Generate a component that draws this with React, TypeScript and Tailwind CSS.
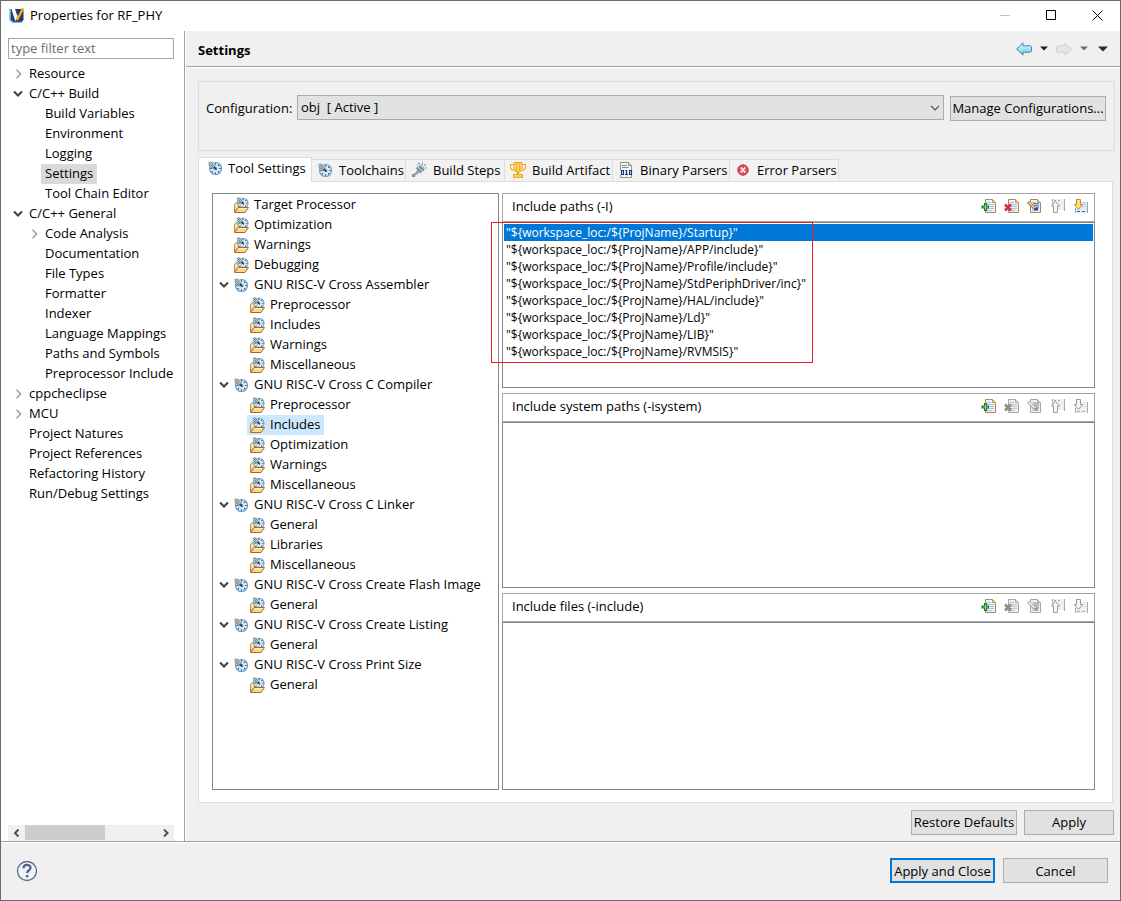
import React from "react";

type IconProps = { className?: string };

const Chevron = ({ open }: { open: boolean }) => (
  <svg width="10" height="10" viewBox="0 0 10 10" fill="none" strokeWidth={open ? 2 : 1.6} stroke={open ? "#404040" : "#a0a0a0"}>
    <path d={open ? "M1 2.500 L5 6.500 L9 2.500" : "M3.500 0.800 L7.500 5 L3.500 9.200"} />
  </svg>
);

const GaugeShape = () => (
  <g>
    <circle cx="8.500" cy="8.500" r="6" fill="#d9ebf7" stroke="#6a9fc6" strokeWidth="1.200" />
    <path d="M8.500 3.300v1.500M8.500 12.200v1.500M12.200 8.500h1.500M3.300 8.500h1.500M12.300 4.700l-1.100 1.100M4.700 12.300l1.100-1.100M12.300 12.300l-1.100-1.100" stroke="#2b527a" strokeWidth="1.200" />
    <path d="M1.500 1.500h4L10 8l-2 1.800L1.500 5z" fill="#c7d3da" />
    <path d="M1.800 2.200l6.500 7.200M3.500 1.800L10 8.600M1.600 4.600l5.800 5.200" stroke="#4c606e" strokeWidth="0.800" />
    <path d="M7 7l2.600 2.800" stroke="#1c3a52" strokeWidth="1.500" />
  </g>
);

const GaugeIcon = ({ className }: IconProps) => (
  <svg width="16" height="16" viewBox="0 0 16 16" className={className} fill="none">
    <GaugeShape />
  </svg>
);

const FolderGaugeIcon = () => (
  <svg width="16" height="16" viewBox="0 0 16 16" fill="none">
    <path d="M1.500 14.500v-7l1.500-2h3v5z" fill="#f7dfa6" stroke="#b98a45" />
    <path d="M12 10.500l1.500-1.500" stroke="#b98a45" />
    <g transform="translate(2.600 -1) scale(0.860)">
      <GaugeShape />
    </g>
    <path d="M1.500 15.500l3.500-5h10.500l-3.500 5z" fill="#fbd888" stroke="#a9672c" />
    <path d="M5.300 11.500h8.700" stroke="#fff0c4" />
  </svg>
);

const BuildStepsIcon = () => (
  <svg width="16" height="16" viewBox="0 0 16 16" fill="none">
    <path d="M1 12h3v3H1z" fill="#7f95a5" />
    <path d="M2.500 12.500L7 7.500l2.500 2.500-5 3.500z" fill="#8fa3b1" />
    <path d="M5.500 5.500l5 5M8 4l5 4.500" stroke="#7b92a3" strokeWidth="2.400" />
    <path d="M7 1.500h2M11 1h1M10 3h2M13 3h2M14 6h1.500M12 5.500h1M6 3h1" stroke="#8da2b0" strokeWidth="1.300" />
  </svg>
);

const TrophyIcon = () => (
  <svg width="16" height="16" viewBox="0 0 16 16" fill="none">
    <path d="M4 2.500H0.500v3L2 8h3M12 2.500h3.500v3L14 8h-3" stroke="#f0a81e" strokeWidth="1.200" />
    <path d="M4 0.500h8v7l-2 2.500H6L4 7.500z" fill="#fbd264" stroke="#f0a81e" />
    <path d="M6.500 1v8M9.500 1v8" stroke="#eeb033" />
    <path d="M7 10h2v3H7z" fill="#f0a81e" />
    <path d="M3.500 12.500h9v3h-9z" fill="#fbd264" stroke="#e9a71f" />
  </svg>
);

const BinaryIcon = () => (
  <svg width="16" height="16" viewBox="0 0 16 16" fill="none">
    <path d="M2.500 0.500h8l3 3v12h-11z" fill="#f3f7fb" stroke="#a89457" />
    <path d="M10.500 0.500v3h3" fill="#e6cf8b" stroke="#a89457" />
    <path d="M4 3.500h5M4 5.500h7" stroke="#6c93c8" />
    <path d="M2 8h12v5H2z" fill="#f3f7fb" />
    <path d="M3.500 8.500h2v4h-2zM11.500 8.500h2v4h-2z" stroke="#1f3566" strokeWidth="1.200" />
    <path d="M7.500 8.500h1v4M7 12.500h3" stroke="#1f3566" strokeWidth="1.200" />
  </svg>
);

const ErrorIcon = () => (
  <svg width="16" height="16" viewBox="0 0 16 16" fill="none">
    <circle cx="8" cy="8" r="5.200" fill="#e2505f" stroke="#c22f45" />
    <path d="M5.800 5.500l4.400 5M10.200 5.500l-4.400 5" stroke="#fff" strokeWidth="1.500" />
  </svg>
);

const Page = ({ off, x }: { off: boolean; x: number }) => (
  <g transform={`translate(${x} 0)`}>
    <path d="M0.500 1.500h7l3 3v10h-10z" fill={off ? "#f0f0f0" : "#eef3fb"} stroke={off ? "#a6a6a6" : "#a88a45"} />
    <path d="M7.500 1.500v3h3" fill={off ? "#dcdcdc" : "#f2cf7e"} stroke={off ? "#a6a6a6" : "#c39a49"} />
    <path d="M2 4.500h4M2 6.500h7M2 8.500h7M2 10.500h7M2 12.500h5" stroke={off ? "#c4c4c4" : "#a9bfe6"} />
  </g>
);

const AddIcon = () => (
  <svg width="16" height="16" viewBox="0 0 16 16" fill="none">
    <Page off={false} x={4} />
    <path d="M3 5h3v2.500h2v3H6V13H3v-2.500H0.500v-3H3z" fill="#1e7a36" />
    <path d="M4.500 6.500v5M2 9h5" stroke="#8fd46c" />
  </svg>
);

const DeleteIcon = ({ off }: { off: boolean }) => (
  <svg width="16" height="16" viewBox="0 0 16 16" fill="none">
    <Page off={off} x={4} />
    <path d="M1 6.500l6 6M7 6.500l-6 6" stroke={off ? "#8c8c8c" : "#d92f40"} strokeWidth="2.600" />
  </svg>
);

const EditIcon = ({ off }: { off: boolean }) => (
  <svg width="16" height="16" viewBox="0 0 16 16" fill="none">
    <Page off={off} x={3} />
    <path d="M6 5.500h6M7 7.500h5M9 9.500h3" stroke={off ? "#b0b0b0" : "#6f8cc4"} />
    <path d="M7 10h4v2.500H7z" fill={off ? "#9a9a9a" : "#2c4f8f"} />
    <path d="M1 4l7 6.500" stroke={off ? "#9a9a9a" : "#8a6527"} strokeWidth="3" />
    <path d="M1.500 4.200l6.200 5.800" stroke={off ? "#f0f0f0" : "#f1cd84"} strokeWidth="1.700" />
  </svg>
);

const UpIcon = () => (
  <svg width="16" height="16" viewBox="0 0 16 16" fill="none">
    <path d="M3 1h11v11H3z" fill="#efefef" />
    <path d="M2.500 1v5M14.500 1v12M4 2.500h2M8 2.500h2" stroke="#a8a8a8" />
    <path d="M5.500 3.500l4 4.500h-2v6.500h-4V8h-2z" fill="#f6f6f6" stroke="#9a9a9a" />
  </svg>
);

const DownIcon = ({ off }: { off: boolean }) => (
  <svg width="16" height="16" viewBox="0 0 16 16" fill="none">
    <path d="M3 4h11v11H3z" fill={off ? "#efefef" : "#e3ebf8"} />
    <path d="M14.500 4v11M2.500 10v5" stroke={off ? "#a8a8a8" : "#8fa2c2"} />
    <path d="M9 4.500h4M9 6.500h4M9 8.500h4" stroke={off ? "#e4e4e4" : "#b9c8e4"} />
    <path d="M4 13.500h3M9 13.500h3" stroke={off ? "#a8a8a8" : "#3b66a8"} />
    <path d="M3.500 1.500h4v5h2l-4 5-4-5h2z" fill={off ? "#f6f6f6" : "#fde07a"} stroke={off ? "#9a9a9a" : "#c58a22"} />
  </svg>
);

const HistoryArrow = ({ off }: { off: boolean }) => (
  <svg width="16" height="14" viewBox="0 0 16 14" className={off ? "rotate-180" : ""}>
    <defs>
      <linearGradient id="backFill" x1="0" y1="0" x2="0" y2="1">
        <stop offset="0" stopColor="#e0f7ff" />
        <stop offset="1" stopColor="#6cc8f0" />
      </linearGradient>
    </defs>
    <path d="M0.700 7L7 0.800v3h7.500l1 1v4.400l-1 1H7v3z" fill={off ? "#e6e6e6" : "url(#backFill)"} stroke={off ? "#d0d0d0" : "#3f86a8"} />
  </svg>
);

const Triangle = ({ fill, wide }: { fill: string; wide?: boolean }) =>
  wide ? (
    <svg width="10" height="6" viewBox="0 0 10 6">
      <path d="M0 0.500h10L5 5.500z" fill={fill} />
    </svg>
  ) : (
    <svg width="8" height="5" viewBox="0 0 8 5">
      <path d="M0 0.500h8L4 4.500z" fill={fill} />
    </svg>
  );

type Node = { label: string; level: number; state?: "open" | "closed"; selected?: boolean };

const pages: Node[] = [
  { label: "Resource", level: 0, state: "closed" },
  { label: "C/C++ Build", level: 0, state: "open" },
  { label: "Build Variables", level: 1 },
  { label: "Environment", level: 1 },
  { label: "Logging", level: 1 },
  { label: "Settings", level: 1, selected: true },
  { label: "Tool Chain Editor", level: 1 },
  { label: "C/C++ General", level: 0, state: "open" },
  { label: "Code Analysis", level: 1, state: "closed" },
  { label: "Documentation", level: 1 },
  { label: "File Types", level: 1 },
  { label: "Formatter", level: 1 },
  { label: "Indexer", level: 1 },
  { label: "Language Mappings", level: 1 },
  { label: "Paths and Symbols", level: 1 },
  { label: "Preprocessor Include", level: 1 },
  { label: "cppcheclipse", level: 0, state: "closed" },
  { label: "MCU", level: 0, state: "closed" },
  { label: "Project Natures", level: 0 },
  { label: "Project References", level: 0 },
  { label: "Refactoring History", level: 0 },
  { label: "Run/Debug Settings", level: 0 },
];

const tools: Node[] = [
  { label: "Target Processor", level: 0 },
  { label: "Optimization", level: 0 },
  { label: "Warnings", level: 0 },
  { label: "Debugging", level: 0 },
  { label: "GNU RISC-V Cross Assembler", level: 0, state: "open" },
  { label: "Preprocessor", level: 1 },
  { label: "Includes", level: 1 },
  { label: "Warnings", level: 1 },
  { label: "Miscellaneous", level: 1 },
  { label: "GNU RISC-V Cross C Compiler", level: 0, state: "open" },
  { label: "Preprocessor", level: 1 },
  { label: "Includes", level: 1, selected: true },
  { label: "Optimization", level: 1 },
  { label: "Warnings", level: 1 },
  { label: "Miscellaneous", level: 1 },
  { label: "GNU RISC-V Cross C Linker", level: 0, state: "open" },
  { label: "General", level: 1 },
  { label: "Libraries", level: 1 },
  { label: "Miscellaneous", level: 1 },
  { label: "GNU RISC-V Cross Create Flash Image", level: 0, state: "open" },
  { label: "General", level: 1 },
  { label: "GNU RISC-V Cross Create Listing", level: 0, state: "open" },
  { label: "General", level: 1 },
  { label: "GNU RISC-V Cross Print Size", level: 0, state: "open" },
  { label: "General", level: 1 },
];

const includePaths = ["Startup", "APP/include", "Profile/include", "StdPeriphDriver/inc", "HAL/include", "Ld", "LIB", "RVMSIS"].map(
  (dir) => '"${workspace_loc:/${ProjName}/' + dir + '}"',
);

const tabs = [
  { label: "Toolchains", icon: <GaugeIcon />, width: "w-[94px]" },
  { label: "Build Steps", icon: <BuildStepsIcon />, width: "w-[99px]" },
  { label: "Build Artifact", icon: <TrophyIcon />, width: "w-[108px]" },
  { label: "Binary Parsers", icon: <BinaryIcon />, width: "w-[117px]" },
  { label: "Error Parsers", icon: <ErrorIcon />, width: "w-[109px]" },
];

function PathSection({ title, items = [] }: { title: string; items?: string[] }) {
  const empty = items.length === 0;
  const actions = [
    { name: "Add", icon: <AddIcon />, disabled: false },
    { name: "Delete", icon: <DeleteIcon off={empty} />, disabled: empty },
    { name: "Edit", icon: <EditIcon off={empty} />, disabled: empty },
    { name: "Move up", icon: <UpIcon />, disabled: true },
    { name: "Move down", icon: <DownIcon off={empty} />, disabled: empty },
  ];
  return (
    <section className="relative flex flex-col">
      <header className="flex h-[29px] items-center justify-between border border-[#a5a5a5] pr-[5px] pb-[3px] pl-[9px]">
        <h2>{title}</h2>
        <div className="flex gap-[7px]">
          {actions.map((a) => (
            <button key={a.name} type="button" aria-label={`${a.name}: ${title}`} disabled={a.disabled}>
              {a.icon}
            </button>
          ))}
        </div>
      </header>
      <ul role="listbox" aria-label={title} className="flex-1 border border-[#828790] p-px text-xs">
        {items.map((item, i) => (
          <li key={item} role="option" aria-selected={i === 0} className={i === 0 ? "h-[17px] bg-[#0078d7] pl-[2px] leading-[17px] whitespace-nowrap text-white" : "h-[17px] pl-[2px] leading-[17px] whitespace-nowrap"}>
            {item}
          </li>
        ))}
      </ul>
      {!empty && <div className="pointer-events-none absolute top-[29px] -left-[11px] h-[141px] w-[322px] border border-[#ed1c24]" />}
    </section>
  );
}

const button = "h-[25px] border border-[#adadad] bg-[#e1e1e1] text-center whitespace-nowrap";

export default function App() {
  return (
    <div className="flex min-h-screen flex-col border border-[#6b6b6f] bg-[#f0f0f0] font-['Open_Sans',sans-serif] text-[13px] leading-5 text-black">
      <header className="flex h-[30px] items-center bg-white pr-[17px] pb-[2px] pl-2">
        <svg width="16" height="16" viewBox="0 0 16 16" className="mr-[5px]">
          <path d="M1.500 2h13v11l-2 2H3.500l-2-2z" fill="#26386f" />
          <path d="M1 2v11l3 2.400h9" fill="none" stroke="#5cc3dc" strokeWidth="1.500" />
          <path d="M2.500 2H6l2 6 1 1-2 4.500H6z" fill="#fff" />
          <path d="M7 12.500L8 8l1 1L13 0.500l2 1.500L9 13.500z" fill="#f6b21c" />
        </svg>
        <h1 className="flex-1">Properties for RF_PHY</h1>
        <div className="flex gap-9">
          <button type="button" aria-label="Minimize" disabled>
            <svg width="10" height="10" viewBox="0 0 10 10"><path d="M0 5.500h10" stroke="#c4c4c4" /></svg>
          </button>
          <button type="button" aria-label="Maximize">
            <svg width="10" height="10" viewBox="0 0 10 10"><path d="M0.500 0.500h9v9h-9z" fill="none" stroke="#000" /></svg>
          </button>
          <button type="button" aria-label="Close">
            <svg width="11" height="11" viewBox="0 0 11 11"><path d="M0.500 0.500l10 10M10.500 0.500l-10 10" stroke="#000" /></svg>
          </button>
        </div>
      </header>

      <div className="flex flex-1">
        <aside className="flex w-[184px] shrink-0 flex-col border-r border-[#a0a0a0] bg-white pt-[7px] pr-[10px] pl-[7px]">
          <input type="text" aria-label="Filter" placeholder="type filter text" className="h-[21px] w-full border border-[#a5a5ab] px-[2px] pb-[2px] placeholder:text-[#6d6d6d]" />
          <ul role="tree" aria-label="Property pages" className="mt-[5px] flex-1">
            {pages.map((n) => (
              <li key={n.label} role="treeitem" aria-selected={!!n.selected} className={n.level ? "flex h-5 items-center pl-[21px]" : "flex h-5 items-center pl-[5px]"}>
                <span className="w-3 shrink-0">{n.state && <Chevron open={n.state === "open"} />}</span>
                <span className={n.selected ? "h-5 bg-[#d9d9d9] px-1 leading-[18px] whitespace-nowrap" : "h-5 px-1 leading-[18px] whitespace-nowrap"}>{n.label}</span>
              </li>
            ))}
          </ul>
          <div className="flex h-4 items-center bg-[#f0f0f0]">
            <button type="button" aria-label="Scroll left" className="flex h-4 w-[17px] items-center justify-center">
              <svg width="8" height="8" viewBox="0 0 8 8"><path d="M5.500 0.500L2 4L5.500 7.500" fill="none" stroke="#505050" strokeWidth="2" /></svg>
            </button>
            <div className="h-[15px] w-20 self-start bg-[#cdcdcd]" />
            <button type="button" aria-label="Scroll right" className="ml-auto flex h-4 w-[17px] items-center justify-center">
              <svg width="8" height="8" viewBox="0 0 8 8"><path d="M2 0.500L5.500 4L2 7.500" fill="none" stroke="#505050" strokeWidth="2" /></svg>
            </button>
          </div>
        </aside>

        <main className="flex min-w-0 flex-1 flex-col border-l border-white">
          <div className="flex h-9 items-center justify-between border-b border-[#a0a0a0] pr-3 pl-3">
            <h2 className="pt-[2px] font-bold">Settings</h2>
            <div className="flex items-center gap-2">
              <button type="button" aria-label="Back"><HistoryArrow off={false} /></button>
              <button type="button" aria-label="Back history"><Triangle fill="#1e1e1e" /></button>
              <button type="button" aria-label="Forward" disabled><HistoryArrow off /></button>
              <button type="button" aria-label="Forward history"><Triangle fill="#707070" /></button>
              <button type="button" aria-label="View menu" className="ml-[2px]"><Triangle fill="#32204a" wide /></button>
            </div>
          </div>
          <div className="flex flex-1 flex-col border-t border-white pr-[5px] pl-3">
            <div className="mt-[13px] flex h-[70px] items-start border border-[#dcdcdc] pt-[13px] pr-2 pl-[7px]">
              <label htmlFor="configuration" className="w-[91px] shrink-0 pt-[3px]">Configuration:</label>
              <div className="relative mr-[6px] flex-1">
                <select id="configuration" className="block h-[25px] w-full appearance-none border border-[#a9abab] bg-[#e1e3e2] pr-6 pb-px pl-[3px] whitespace-pre">
                  <option>{"obj\u00a0 [ Active ]"}</option>
                </select>
                <svg width="10" height="6" viewBox="0 0 10 6" className="pointer-events-none absolute top-[10px] right-[4px]">
                  <path d="M1 0.800L5 4.800L9 0.800" fill="none" stroke="#505050" strokeWidth="1.200" />
                </svg>
              </div>
              <button type="button" className={`${button} mt-px w-[156px] pb-[2px]`}>Manage Configurations...</button>
            </div>

            <div role="tablist" className="relative z-10 mt-[6px] -mb-px flex items-end">
              <button type="button" role="tab" aria-selected="true" className="flex h-[25px] w-[114px] items-center gap-[5px] border border-b-0 border-[#dcdcdc] bg-white pb-1 pl-2 whitespace-nowrap">
                <GaugeIcon />
                Tool Settings
              </button>
              {tabs.map((t) => (
                <button key={t.label} type="button" role="tab" aria-selected="false" className={`${t.width} flex h-[23px] items-center gap-[6px] border-y border-r border-[#dcdcdc] bg-[#f2f2f2] pb-[2px] pl-[5px] whitespace-nowrap`}>
                  {t.icon}
                  {t.label}
                </button>
              ))}
            </div>

            <div role="tabpanel" className="mr-[2px] flex flex-1 gap-[3px] border border-[#dcdcdc] bg-white pt-[11px] pr-[17px] pb-3 pl-[13px]">
              <ul role="tree" aria-label="Tools" className="w-[287px] shrink-0 border border-[#828790] pt-px">
                {tools.map((n, i) => (
                  <li key={i} role="treeitem" aria-selected={!!n.selected} className={n.level ? "flex h-5 items-center pl-[22px]" : "flex h-5 items-center pl-[6px]"}>
                    <span className="w-3 shrink-0">{n.state && <Chevron open />}</span>
                    <span className={n.selected ? "flex items-center gap-[5px] bg-[#cce8ff] pr-[3px] pl-[2px] whitespace-nowrap" : "flex items-center gap-[5px] pr-[3px] pl-[2px] whitespace-nowrap"}>
                      {n.state ? <GaugeIcon /> : <FolderGaugeIcon />}
                      <span className="h-5 leading-[18px]">{n.label}</span>
                    </span>
                  </li>
                ))}
              </ul>
              <div className="grid min-w-0 flex-1 grid-rows-[195px_195px_1fr] gap-[5px]">
                <PathSection title="Include paths (-I)" items={includePaths} />
                <PathSection title="Include system paths (-isystem)" />
                <PathSection title="Include files (-include)" />
              </div>
            </div>

            <div className="flex justify-end gap-[7px] pt-[7px] pr-px pb-[6px]">
              <button type="button" className={`${button} w-[106px] pb-[2px]`}>Restore Defaults</button>
              <button type="button" className={`${button} w-[90px] pb-[2px]`}>Apply</button>
            </div>
          </div>
        </main>
      </div>

      <footer className="flex h-[59px] items-center border-t border-[#a0a0a0] pr-3 pb-px pl-[15px] shadow-[inset_0_1px_0_#fff]">
        <button type="button" aria-label="Help">
          <svg width="22" height="22" viewBox="0 0 22 22" fill="none">
            <circle cx="11" cy="11" r="9.500" fill="#f2f3f6" stroke="#5a6c8e" strokeWidth="1.300" />
            <path d="M7.500 8.200c0-4.400 7-4.400 7-0.400 0 2.600-3.400 2.600-3.400 5.200" stroke="#4d6288" strokeWidth="2.300" />
            <path d="M9.900 15h2.400v2.300H9.900z" fill="#4d6288" />
          </svg>
        </button>
        <button type="button" className="ml-auto h-[25px] w-[105px] border-2 border-[#0078d7] bg-[#e1e1e1] text-center whitespace-nowrap">Apply and Close</button>
        <button type="button" className={`${button} ml-2 w-[105px]`}>Cancel</button>
      </footer>
    </div>
  );
}
